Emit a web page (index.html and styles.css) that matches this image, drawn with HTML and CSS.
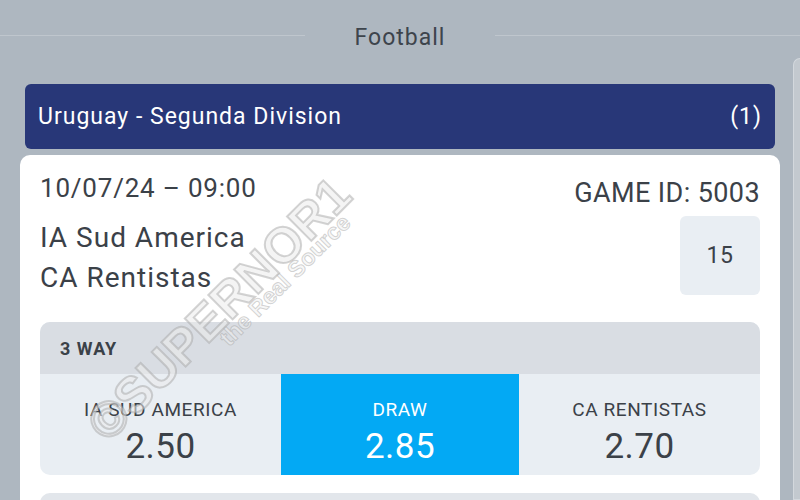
FILE: index.html
```html
<!DOCTYPE html>
<html>
<head>
<meta charset="utf-8">
<link rel="stylesheet" href="styles.css">
</head>
<body>
<div class="title-row">
  <span class="title-line"></span>
  <span class="title">Football</span>
  <span class="title-line"></span>
</div>
<div class="content">
  <div class="main">
    <div class="league">
      <span>Uruguay - Segunda Division</span>
      <span>(1)</span>
    </div>
    <div class="card">
      <div class="match">
        <div class="match-left">
          <div class="date">10/07/24 – 09:00</div>
          <div class="teams">
            <div class="team">IA Sud America</div>
            <div class="team">CA Rentistas</div>
          </div>
        </div>
        <div class="match-right">
          <div class="game-id">GAME ID: 5003</div>
          <div class="count">15</div>
        </div>
      </div>
      <div class="market">
        <div class="market-head">3 WAY</div>
        <div class="odds">
          <div class="odd">
            <div class="odd-label">IA SUD AMERICA</div>
            <div class="odd-value">2.50</div>
          </div>
          <div class="odd selected">
            <div class="odd-label">DRAW</div>
            <div class="odd-value">2.85</div>
          </div>
          <div class="odd">
            <div class="odd-label">CA RENTISTAS</div>
            <div class="odd-value">2.70</div>
          </div>
        </div>
      </div>
      <div class="market next"></div>
      <div class="watermark">
        <div class="wm-big">©SUPERNOR1</div>
        <div class="wm-small">the Real Source</div>
      </div>
    </div>
  </div>
  <div class="side"></div>
</div>
</body>
</html>
```
FILE: styles.css
```css
html, body {
  margin: 0;
  padding: 0;
}
body {
  width: 800px;
  height: 500px;
  overflow: hidden;
  background: #aeb7c0;
  font-family: Roboto, "Noto Sans", sans-serif;
  color: #3b4148;
}
.title-row {
  display: flex;
  align-items: center;
  padding-top: 22px;
  height: 32px;
}
.title-line {
  flex: 1;
  height: 1px;
  background: #bfc6cd;
  margin-top: -5px;
}
.title {
  font-size: 23px;
  letter-spacing: 1px;
  line-height: 32px;
  padding: 0 50px;
  color: #3d444c;
}
.content {
  display: flex;
  margin-top: 4px;
  height: 442px;
}
.main {
  width: 760px;
  margin-left: 20px;
  padding-top: 26px;
  flex: none;
}
.side {
  flex: 1;
  margin-left: 13px;
  background: #c3c9cf;
  border: 1px solid #d3d8dd;
  border-right: none;
  border-radius: 10px 0 0 0;
}
.league {
  margin: 0 5px;
  height: 65px;
  background: #283778;
  border-radius: 6px;
  padding: 0 13px;
  display: flex;
  justify-content: space-between;
  align-items: center;
  color: #ffffff;
  font-size: 23px;
  letter-spacing: 1px;
}
.card {
  position: relative;
  overflow: hidden;
  margin-top: 6px;
  background: #ffffff;
  border-radius: 10px 10px 0 0;
  padding: 17px 20px 0;
  height: 400px;
}
.match {
  display: flex;
  justify-content: space-between;
}
.date {
  font-size: 26px;
  letter-spacing: 0.8px;
  line-height: 32px;
}
.teams {
  margin-top: 14px;
}
.team {
  font-size: 28px;
  letter-spacing: 1px;
  line-height: 40px;
}
.match-right {
  display: flex;
  flex-direction: column;
  align-items: flex-end;
}
.game-id {
  font-size: 27px;
  letter-spacing: 0.4px;
  line-height: 32px;
  margin-top: 5px;
}
.count {
  margin-top: 7px;
  width: 80px;
  height: 79px;
  background: #e9eef3;
  border-radius: 6px;
  display: flex;
  align-items: center;
  justify-content: center;
  font-size: 23px;
  letter-spacing: 0.5px;
}
.market {
  margin-top: 24px;
  border-radius: 10px;
  overflow: hidden;
  background: #e9eef3;
}
.market-head {
  background: #d9dde3;
  height: 52px;
  padding-left: 20px;
  display: flex;
  align-items: center;
  font-size: 18px;
  letter-spacing: 1px;
  font-weight: 700;
}
.odds {
  display: grid;
  grid-template-columns: 241px 238px 241px;
  height: 101px;
}
.odd {
  display: flex;
  flex-direction: column;
  align-items: center;
  padding-top: 24px;
}
.odd.selected {
  background: #03a9f4;
  color: #ffffff;
}
.odd-label {
  font-size: 19px;
  letter-spacing: 0.6px;
  line-height: 24px;
}
.odd-value {
  font-size: 35px;
  letter-spacing: 0.5px;
  line-height: 50px;
}
.market.next {
  margin-top: 18px;
  height: 40px;
  background: #e2e6eb;
}
.watermark {
  position: absolute;
  left: 30px;
  top: 128px;
  transform: rotate(-45deg);
  transform-origin: center;
  text-align: center;
  pointer-events: none;
}
.wm-big {
  font-family: "Liberation Sans", Arial, sans-serif;
  font-weight: 700;
  font-size: 50px;
  line-height: 48px;
  color: rgba(235, 235, 235, 0.55);
  -webkit-text-stroke: 2px rgba(160, 160, 160, 0.45);
}
.wm-small {
  font-family: "Liberation Sans", Arial, sans-serif;
  font-weight: 700;
  font-size: 23px;
  line-height: 24px;
  margin-top: -10px;
  padding-left: 134px;
  color: rgba(240, 240, 240, 0.5);
  -webkit-text-stroke: 1px rgba(160, 160, 160, 0.45);
}
```
